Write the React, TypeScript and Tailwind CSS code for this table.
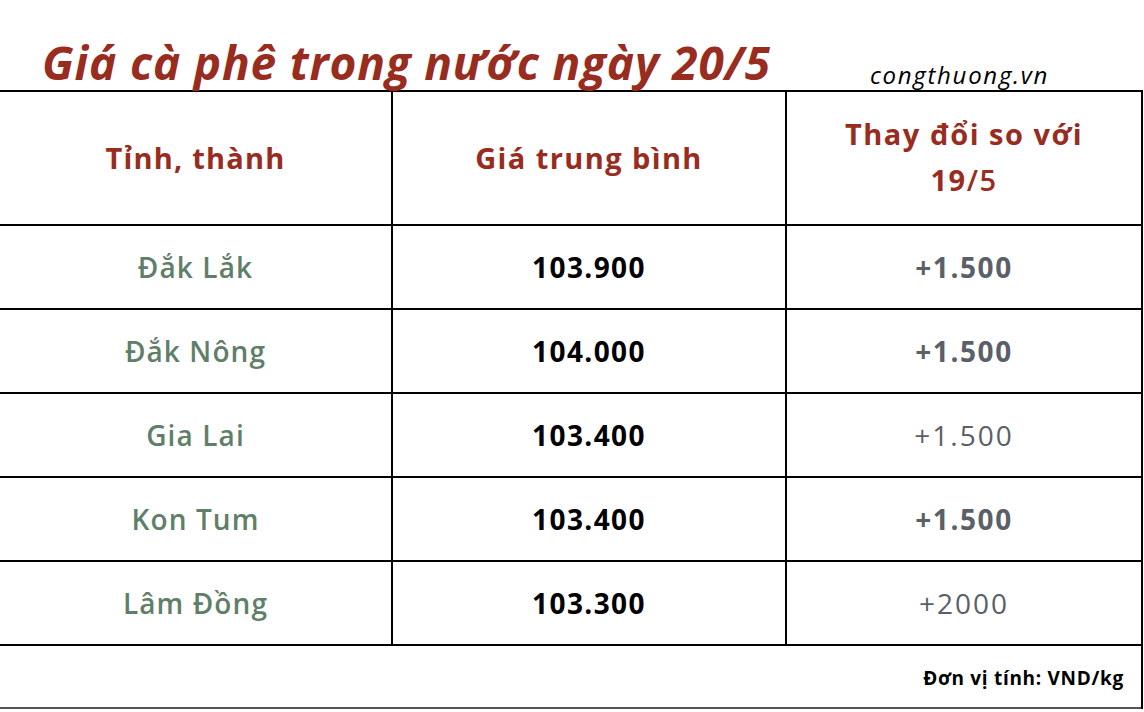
import React from "react";

const rows = [
  { name: "Đắk Lắk", price: "103.900", change: "+1.500", bold: true },
  { name: "Đắk Nông", price: "104.000", change: "+1.500", bold: true },
  { name: "Gia Lai", price: "103.400", change: "+1.500", bold: false },
  { name: "Kon Tum", price: "103.400", change: "+1.500", bold: true },
  { name: "Lâm Đồng", price: "103.300", change: "+2000", bold: false },
];

export default function App() {
  return (
    <div
      className="w-[1144px] h-[712px] bg-white overflow-hidden"
      style={{ fontFamily: "'Open Sans', Lato, sans-serif" }}
    >
      <div className="h-[90px] flex items-end">
        <h1 className="w-[870px] shrink-0 pl-[42px] pb-[5px] text-[46px] leading-none font-bold italic text-[#982d1f] tracking-[0.8px] whitespace-nowrap">
          Giá cà phê trong nước ngày 20/5
        </h1>
        <div className="pb-[3px] text-[24px] leading-none italic font-medium text-black tracking-[1.7px]">
          congthuong.vn
        </div>
      </div>
      <div className="w-[1143px] border-t-2 border-r-2 border-black">
        <div className="grid grid-cols-[393px_394px_1fr] h-[134px] border-b-2 border-black">
          <div className="border-r-2 border-black flex items-center justify-center text-[29px] font-bold text-[#982d1f] tracking-[1.2px]">
            Tỉnh, thành
          </div>
          <div className="border-r-2 border-black flex items-center justify-center text-[29px] font-bold text-[#982d1f] tracking-[1.4px]">
            Giá trung bình
          </div>
          <div className="flex items-center justify-center text-center text-[29px] leading-[46px] font-bold text-[#982d1f] tracking-[1.5px] pb-[2px]">
            <div>
              Thay đổi so với
              <br />
              19<span className="font-semibold">/5</span>
            </div>
          </div>
        </div>
        {rows.map((r) => (
          <div
            key={r.name}
            className="grid grid-cols-[393px_394px_1fr] h-[84px] border-b-2 border-black"
          >
            <div className="border-r-2 border-black flex items-center justify-center text-[28px] font-semibold text-[#5f7f69] tracking-[1.1px]">
              {r.name}
            </div>
            <div className="border-r-2 border-black flex items-center justify-center text-[28px] font-bold text-black tracking-[1.4px]">
              {r.price}
            </div>
            <div
              className={
                r.bold
                  ? "flex items-center justify-center text-[28px] font-bold text-[#5b6068] tracking-[1.6px]"
                  : "flex items-center justify-center text-[28px] font-normal text-[#5b6068] tracking-[2px]"
              }
            >
              {r.change}
            </div>
          </div>
        ))}
        <div className="h-[63px] border-b-2 border-[#555] flex items-center justify-end pr-[17px] pt-[4px] text-[19px] font-bold text-black tracking-[0.7px]">
          Đơn vị tính: VND/kg
        </div>
      </div>
    </div>
  );
}
